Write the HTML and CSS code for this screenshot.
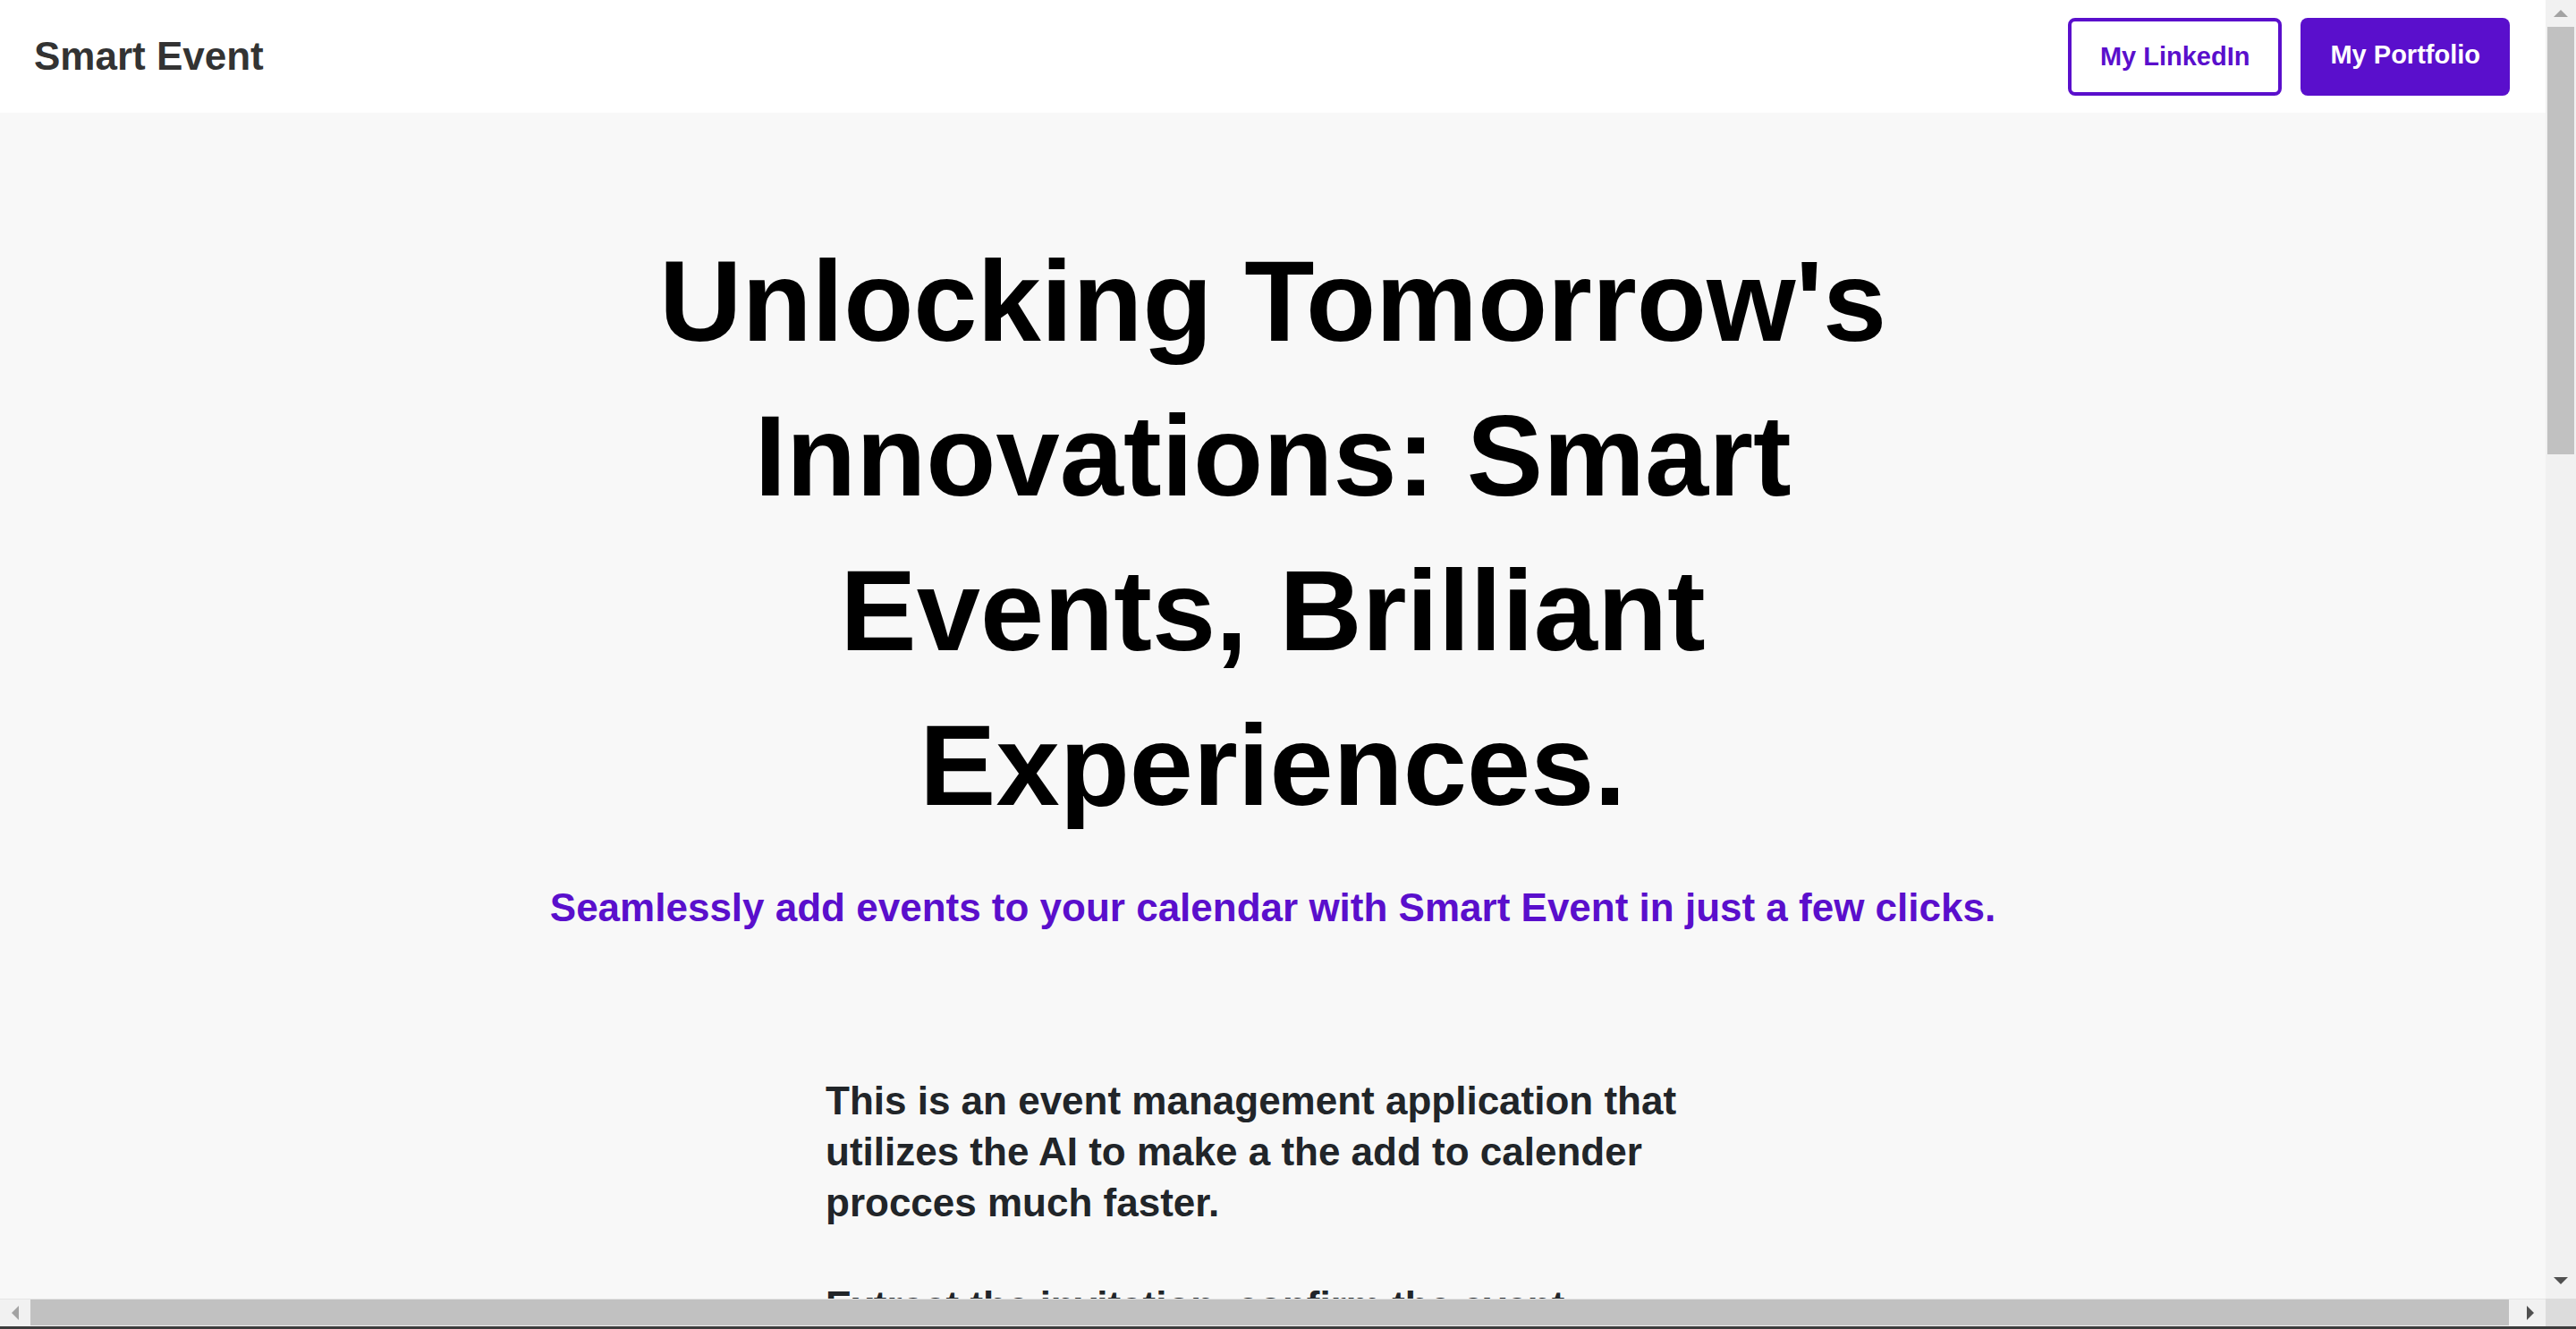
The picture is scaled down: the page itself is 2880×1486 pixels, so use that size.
FILE: index.html
```html
<!DOCTYPE html>
<html lang="en">
<head>
<meta charset="utf-8">
<title>Smart Event</title>
<link rel="stylesheet" href="styles.css">
</head>
<body>
<div class="frame">
  <div class="viewport">
    <header class="topbar">
      <a class="brand" href="#">Smart Event</a>
      <nav class="actions">
        <a class="btn btn-outline" href="#">My LinkedIn</a>
        <a class="btn btn-solid" href="#">My Portfolio</a>
      </nav>
    </header>
    <main class="page">
      <section class="hero">
        <h1 class="hero-title">Unlocking Tomorrow's Innovations: Smart Events, Brilliant Experiences.</h1>
        <p class="hero-sub">Seamlessly add events to your calendar with Smart Event in just a few clicks.</p>
      </section>
      <section class="about">
        <p>This is an event management application that utilizes the AI to make a the add to calender procces much faster.</p>
        <p>Extract the invitation, confirm the event information, and add it to your calendar in one click.</p>
      </section>
      <section class="how">
        <h2 class="how-title">How it works</h2>
        <div class="steps">
          <div class="step"><span class="step-num">1</span><h3>Upload</h3><p>Drop an invitation image or paste the event text.</p></div>
          <div class="step"><span class="step-num">2</span><h3>Review</h3><p>The AI extracts the title, date, time and location for you.</p></div>
          <div class="step"><span class="step-num">3</span><h3>Add</h3><p>Save the event straight to your calendar.</p></div>
        </div>
      </section>
    </main>
  </div>
  <div class="vscroll" aria-hidden="true">
    <div class="sb-btn sb-btn-up"><span class="arrow arrow-up"></span></div>
    <div class="vtrack"><div class="vthumb"></div></div>
    <div class="sb-btn sb-btn-down"><span class="arrow arrow-down"></span></div>
  </div>
  <div class="hscroll" aria-hidden="true">
    <div class="sb-btn sb-btn-left"><span class="arrow arrow-left"></span></div>
    <div class="htrack"><div class="hthumb"></div></div>
    <div class="sb-btn sb-btn-right"><span class="arrow arrow-right"></span></div>
  </div>
  <div class="corner" aria-hidden="true"></div>
</div>
</body>
</html>
```
FILE: styles.css
```css
html, body {
  margin: 0;
  padding: 0;
  height: 100%;
  overflow: hidden;
}

body {
  background: #f8f8f8;
  font-family: "Liberation Sans", Arial, sans-serif;
}

/* window frame with scrollbars */
.frame {
  display: grid;
  grid-template-columns: 1fr 34px;
  grid-template-rows: 1fr 31px;
  height: 100vh;
  box-sizing: border-box;
  border-bottom: 3px solid #3c3c3c;
}

.viewport {
  min-width: 0;
  min-height: 0;
  overflow: hidden;
  background: #f8f8f8;
}

.vscroll {
  display: flex;
  flex-direction: column;
  background: #f1f1f1;
}

.hscroll {
  display: flex;
  background: #f1f1f1;
  border-top: 1px solid #e6e6e6;
  box-sizing: border-box;
}

.corner {
  background: #dcdcdc;
}

.sb-btn {
  display: flex;
  align-items: center;
  justify-content: center;
  flex: none;
}

.sb-btn-up { height: 30px; }
.sb-btn-down { height: 40px; }
.sb-btn-left, .sb-btn-right { width: 34px; }

.vtrack {
  flex: 1;
  padding: 0 2px;
}

.vthumb {
  height: 478px;
  background: #c1c1c1;
}

.htrack {
  flex: 1;
  display: flex;
  align-items: stretch;
}

.hthumb {
  width: 2771px;
  background: #c1c1c1;
  margin-bottom: 1px;
}

.arrow {
  width: 0;
  height: 0;
  border-style: solid;
  border-color: transparent;
}

.arrow-up {
  border-width: 0 8px 8px 8px;
  border-bottom-color: #a3a3a3;
}

.arrow-down {
  border-width: 8px 8px 0 8px;
  border-top-color: #505050;
}

.arrow-left {
  border-width: 8px 8px 8px 0;
  border-right-color: #a3a3a3;
}

.arrow-right {
  border-width: 8px 0 8px 8px;
  border-left-color: #505050;
}

/* page content */
.topbar {
  height: 126px;
  box-sizing: border-box;
  background: #ffffff;
  display: flex;
  align-items: center;
  justify-content: space-between;
  padding: 0 40px 0 38px;
}

.brand {
  font-size: 44px;
  font-weight: 700;
  color: #333333;
  text-decoration: none;
}

.actions {
  display: flex;
  gap: 21px;
}

.btn {
  display: block;
  box-sizing: border-box;
  height: 87px;
  font-family: "Liberation Sans", Arial, sans-serif;
  font-size: 29px;
  font-weight: 700;
  line-height: normal;
  border-radius: 8px;
  text-decoration: none;
}

.btn-outline {
  border: 4px solid #5a0fcc;
  background: #ffffff;
  color: #5a0fcc;
  padding: 23px 32px 0;
}

.btn-solid {
  border: 0;
  background: #5a0fcc;
  color: #ffffff;
  padding: 25px 33px 0;
}

.hero {
  padding-top: 124px;
  text-align: center;
}

.hero-title {
  max-width: 1500px;
  margin: 0 auto;
  font-size: 128px;
  line-height: 173px;
  font-weight: 700;
  color: #000000;
}

.hero-sub {
  margin: 48px 0 0;
  font-size: 44px;
  font-weight: 700;
  color: #5a0fcc;
}

.about {
  width: 1000px;
  margin: 162px auto 0;
  font-size: 44px;
  line-height: 1.3;
  font-weight: 700;
  color: #212529;
}

.about p {
  margin: 0 0 57px;
}

.how {
  width: 1800px;
  margin: 160px auto 0;
  text-align: center;
}

.how-title {
  margin: 0 0 64px;
  font-size: 72px;
  color: #000000;
}

.steps {
  display: grid;
  grid-template-columns: repeat(3, 1fr);
  gap: 48px;
}

.step {
  background: #ffffff;
  border-radius: 16px;
  padding: 56px 40px;
  color: #212529;
}

.step-num {
  display: inline-flex;
  align-items: center;
  justify-content: center;
  width: 72px;
  height: 72px;
  border-radius: 50%;
  background: #5a0fcc;
  color: #ffffff;
  font-size: 36px;
  font-weight: 700;
}

.step h3 {
  font-size: 44px;
  margin: 32px 0 16px;
}

.step p {
  font-size: 32px;
  line-height: 1.4;
  margin: 0;
}
```
